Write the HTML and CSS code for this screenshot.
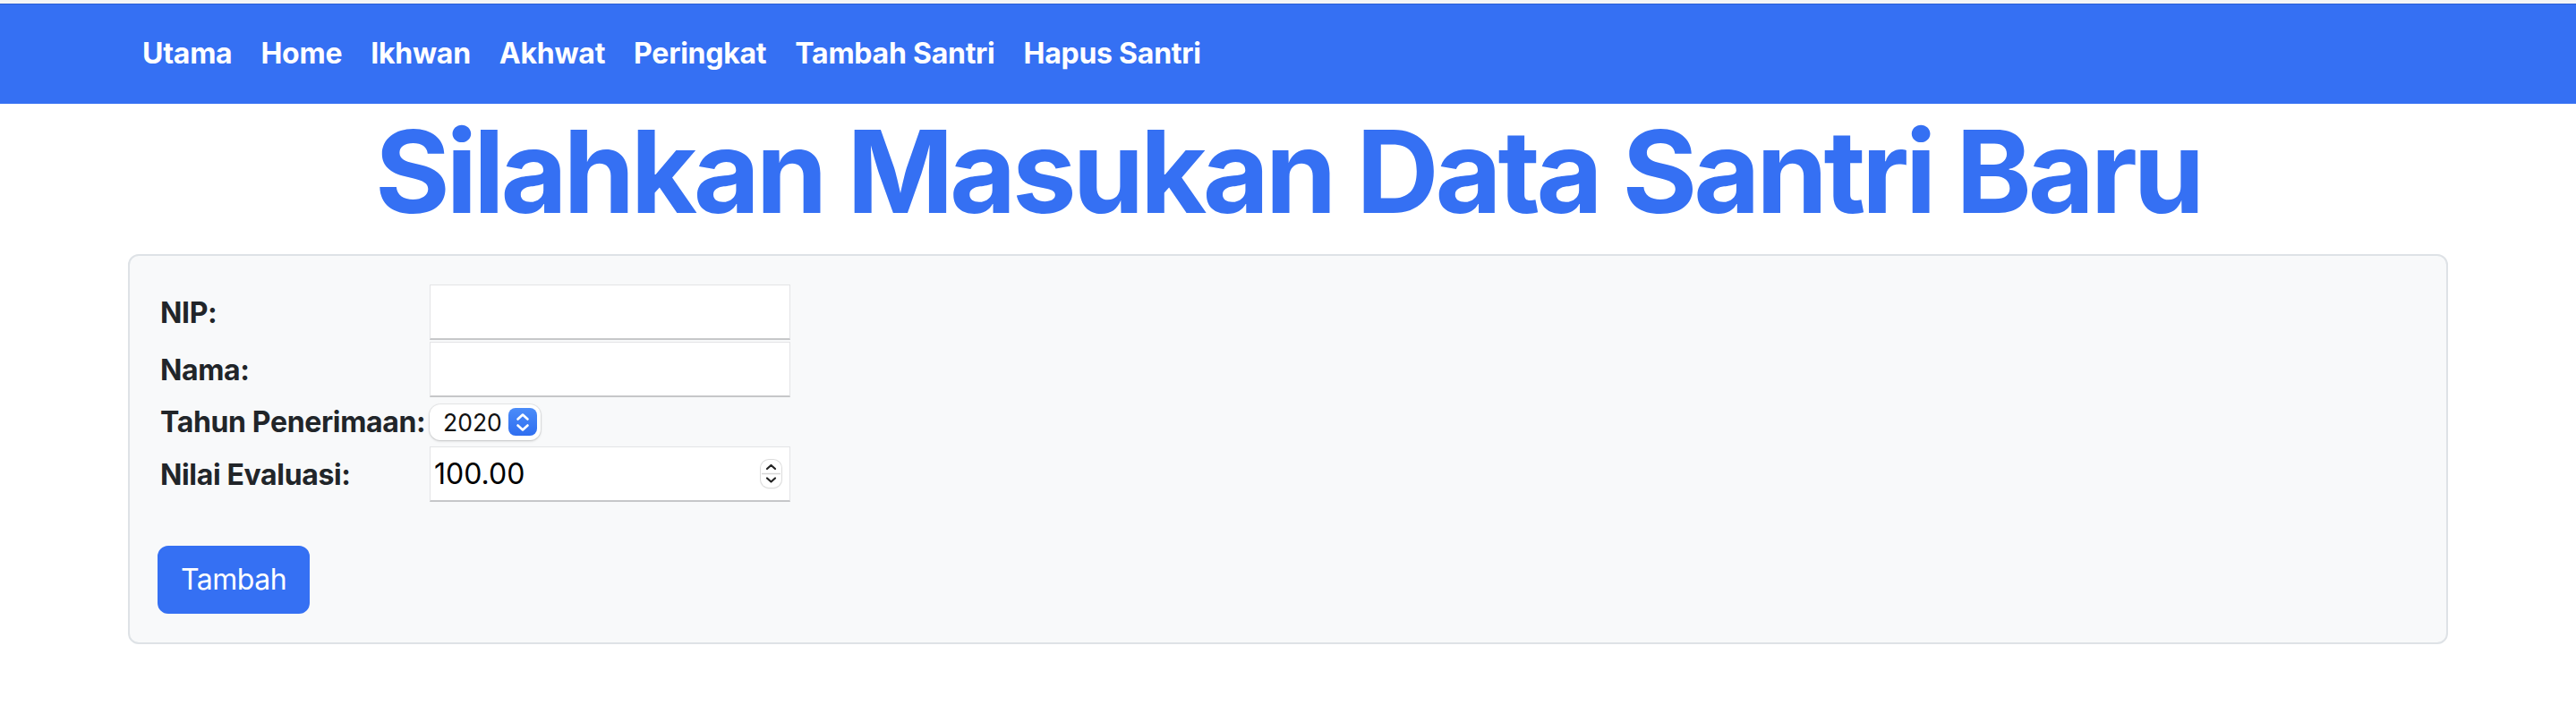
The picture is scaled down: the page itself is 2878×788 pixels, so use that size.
FILE: index.html
```html
<!DOCTYPE html>
<html lang="id">
<head>
<meta charset="utf-8">
<title>Tambah Santri</title>
<link rel="stylesheet" href="styles.css">
</head>
<body>
<div class="topstrip"></div>
<nav class="navbar">
  <div class="container">
    <ul class="nav">
      <li><a class="nav-link" href="#">Utama</a></li>
      <li><a class="nav-link" href="#">Home</a></li>
      <li><a class="nav-link" href="#">Ikhwan</a></li>
      <li><a class="nav-link" href="#">Akhwat</a></li>
      <li><a class="nav-link" href="#">Peringkat</a></li>
      <li><a class="nav-link" href="#">Tambah Santri</a></li>
      <li><a class="nav-link" href="#">Hapus Santri</a></li>
    </ul>
  </div>
</nav>
<main class="container">
  <h1 class="title">Silahkan Masukan Data Santri Baru</h1>
  <div class="card">
    <form class="form">
      <div class="form-grid">
        <label class="label" for="nip">NIP:</label>
        <div class="cell"><input class="field" id="nip" type="text"></div>

        <label class="label" for="nama">Nama:</label>
        <div class="cell"><input class="field" id="nama" type="text"></div>

        <label class="label" for="tahun">Tahun Penerimaan:</label>
        <div class="cell">
          <div class="select-wrap">
            <select class="select" id="tahun">
              <option>2020</option>
              <option>2021</option>
              <option>2022</option>
            </select>
            <span class="select-btn">
              <svg width="32" height="32" viewBox="0 0 32 32" aria-hidden="true">
                <path d="M10.5 12.5 L16 7.5 L21.5 12.5" fill="none" stroke="#fff" stroke-width="2.6" stroke-linecap="round" stroke-linejoin="round"/>
                <path d="M10.5 19.5 L16 24.5 L21.5 19.5" fill="none" stroke="#fff" stroke-width="2.6" stroke-linecap="round" stroke-linejoin="round"/>
              </svg>
            </span>
          </div>
        </div>

        <label class="label" for="nilai">Nilai Evaluasi:</label>
        <div class="cell">
          <div class="num-wrap">
            <input class="num" id="nilai" type="text" value="100.00">
            <span class="spin">
              <svg width="23" height="31" viewBox="0 0 23 31" aria-hidden="true">
                <path d="M7 10 L11.5 6 L16 10" fill="none" stroke="#222" stroke-width="2.2" stroke-linecap="round" stroke-linejoin="round"/>
                <line x1="1" y1="15.5" x2="22" y2="15.5" stroke="#d6d6d6" stroke-width="1.5"/>
                <path d="M7 20.5 L11.5 24.5 L16 20.5" fill="none" stroke="#222" stroke-width="2.2" stroke-linecap="round" stroke-linejoin="round"/>
              </svg>
            </span>
          </div>
        </div>
      </div>
      <button class="btn" type="button">Tambah</button>
    </form>
  </div>
</main>
</body>
</html>
```

FILE: styles.css
```css
* { box-sizing: border-box; }

body {
  margin: 0;
  background: #ffffff;
  font-family: Inter, "Noto Sans", "Liberation Sans", sans-serif;
  color: #212529;
}

.topstrip {
  height: 4px;
  background: #f3f4f6;
}

.container {
  width: 2640px;
  margin: 0 auto;
  padding: 0 24px;
}

.navbar {
  background: #3570f3;
  border-top: 1px solid #2a5fd6;
  padding: 15px 0 16px;
}

.nav {
  list-style: none;
  margin: 0;
  padding: 0;
  display: flex;
}

.nav-link {
  display: block;
  padding: 16px 16px;
  color: #ffffff;
  font-weight: 700;
  font-size: 32px;
  line-height: 48px;
  letter-spacing: -0.25px;
  text-decoration: none;
}

.title {
  margin: 0 0 16px;
  text-align: center;
  color: #3570f3;
  font-size: 128px;
  line-height: 152px;
  font-weight: 700;
  letter-spacing: -4.3px;
}

.card {
  background: #f8f9fa;
  border: 2px solid #dee2e6;
  border-radius: 12px;
  padding: 32px;
}

.form-grid {
  display: grid;
  grid-template-columns: 299px 403px;
  grid-template-rows: 62px 62px 51px 62px;
  column-gap: 4px;
  row-gap: 2px;
}

.label {
  align-self: center;
  font-size: 32px;
  font-weight: 700;
  letter-spacing: -0.35px;
  white-space: nowrap;
  padding-left: 2px;
}

.cell {
  display: flex;
  align-items: center;
}

.field {
  width: 100%;
  height: 62px;
  background: #ffffff;
  border: 1px solid #e3e4e6;
  border-bottom: 2px solid #c6c7c9;
  border-radius: 0;
  padding: 0 4px;
  font-family: inherit;
  font-size: 32px;
  outline: none;
}

.select-wrap {
  display: inline-flex;
  align-items: center;
  height: 40px;
  width: 124px;
  background: #ffffff;
  border-radius: 12px;
  box-shadow: 0 0 0 1px rgba(0, 0, 0, 0.06), 0 1px 3px rgba(0, 0, 0, 0.18);
  padding: 0 4px 0 15px;
}

.select {
  appearance: none;
  -webkit-appearance: none;
  border: none;
  background: transparent;
  font-family: inherit;
  font-size: 26.5px;
  color: #111;
  padding: 0;
  width: 73px;
  outline: none;
}

.select-btn {
  display: flex;
  width: 32px;
  height: 31px;
  border-radius: 8px;
  background: linear-gradient(#4b8cf9, #2f6ef0);
}

.num-wrap {
  display: flex;
  align-items: center;
  width: 100%;
  height: 62px;
  background: #ffffff;
  border: 1px solid #e3e4e6;
  border-bottom: 2px solid #c6c7c9;
  padding: 0 9px 0 4px;
}

.num {
  flex: 1;
  min-width: 0;
  border: none;
  background: transparent;
  font-family: inherit;
  font-size: 32px;
  color: #000;
  padding: 0;
  outline: none;
}

.spin {
  display: flex;
  width: 23px;
  height: 31px;
  border-radius: 9px;
  background: #ffffff;
  box-shadow: 0 0 0 1px #dcdcdc, 0 1px 2px rgba(0, 0, 0, 0.12);
}

.btn {
  display: block;
  margin-top: 49px;
  background: #3570f3;
  border: 2px solid #3570f3;
  border-radius: 12px;
  color: #ffffff;
  font-family: inherit;
  font-size: 32px;
  line-height: 48px;
  letter-spacing: -0.5px;
  padding: 12px 24px;
  margin-left: -1px;
}
```
